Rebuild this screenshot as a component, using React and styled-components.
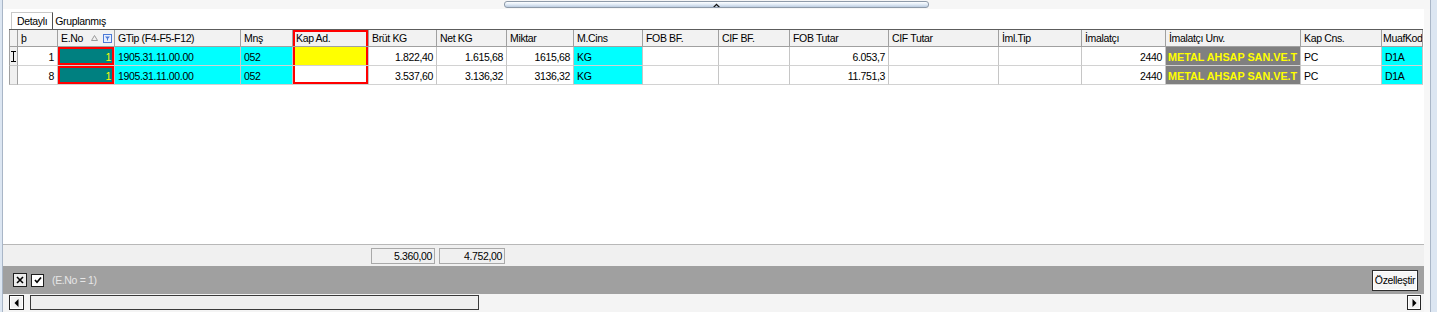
import React from "react";
import styled, { createGlobalStyle, css } from "styled-components";

const GlobalStyle = createGlobalStyle`
  html, body { margin: 0; padding: 0; background: #ffffff; }
  body {
    font-family: "Liberation Sans", Arial, sans-serif;
    font-size: 10.5px;
    letter-spacing: -0.35px;
    color: #000;
  }
  #root { width: 1437px; height: 312px; overflow: hidden; }
`;

const COLUMNS = [
  { key: "ind", w: 9, title: "" },
  { key: "no", w: 40, title: "þ", right: true },
  { key: "eno", w: 57, title: "E.No", right: true, bg: "#008080", color: "#ffff00", red: true },
  { key: "gtip", w: 126, title: "GTip (F4-F5-F12)", bg: "#00ffff" },
  { key: "mns", w: 52, title: "Mnş", bg: "#00ffff" },
  { key: "kap", w: 76, title: "Kap Ad.", box: true },
  { key: "brut", w: 68, title: "Brüt KG", right: true },
  { key: "net", w: 70, title: "Net KG", right: true },
  { key: "mik", w: 67, title: "Miktar", right: true },
  { key: "mcins", w: 69, title: "M.Cins", bg: "#00ffff" },
  { key: "fobbf", w: 76, title: "FOB BF." },
  { key: "cifbf", w: 71, title: "CIF BF." },
  { key: "fob", w: 99, title: "FOB Tutar", right: true },
  { key: "cif", w: 110, title: "CIF Tutar" },
  { key: "iml", w: 83, title: "İml.Tip" },
  { key: "imal", w: 84, title: "İmalatçı", right: true },
  { key: "unv", w: 135, title: "İmalatçı Unv.", bg: "#808080", color: "#ffff00", bold: true },
  { key: "kapcns", w: 81, title: "Kap Cns." },
  { key: "muaf", w: 41, title: "MuafKod", bg: "#00ffff", tight: true },
];

const TEMPLATE = COLUMNS.map((c) => `${c.w}px`).join(" ");

const ROWS = [
  {
    current: true,
    no: "1", eno: "1", gtip: "1905.31.11.00.00", mns: "052", kap: "", kapBg: "#ffff00",
    brut: "1.822,40", net: "1.615,68", mik: "1615,68", mcins: "KG", fobbf: "", cifbf: "",
    fob: "6.053,7", cif: "", iml: "", imal: "2440", unv: "METAL AHSAP SAN.VE.T",
    kapcns: "PC", muaf: "D1A",
  },
  {
    no: "8", eno: "1", gtip: "1905.31.11.00.00", mns: "052", kap: "",
    brut: "3.537,60", net: "3.136,32", mik: "3136,32", mcins: "KG", fobbf: "", cifbf: "",
    fob: "11.751,3", cif: "", iml: "", imal: "2440", unv: "METAL AHSAP SAN.VE.T",
    kapcns: "PC", muaf: "D1A",
  },
];

const Frame = styled.div`
  width: 1437px;
  height: 312px;
  display: flex;
  background: #ffffff;
`;

const Rail = styled.div`
  flex: none;
  width: ${(p) => p.$w}px;
  background: #dce6f2;
  ${(p) =>
    p.$side === "left"
      ? css`border-right: 1px solid #a9b6c7;`
      : css`border-left: 1px solid #a9b6c7;`}
  box-sizing: border-box;
`;

const Center = styled.div`
  flex: 1;
  display: flex;
  flex-direction: column;
  min-width: 0;
`;

const TopStrip = styled.div`
  height: 9px;
  flex: none;
  background: #f6f6f6;
  display: flex;
  justify-content: center;
  padding-top: 1px;
  box-sizing: border-box;
`;

const Splitter = styled.div`
  width: 425px;
  height: 7px;
  box-sizing: border-box;
  border: 1px solid #8e9aa9;
  border-radius: 3px;
  background: linear-gradient(#fdfeff 0%, #e4edf7 45%, #bccde0 100%);
  display: flex;
  justify-content: center;
  align-items: center;
`;

const ContentRow = styled.div`
  flex: 1;
  display: flex;
  min-height: 0;
`;

const Main = styled.div`
  width: 1421px;
  flex: none;
  display: flex;
  flex-direction: column;
`;

const Gutter = styled.div`
  flex: 1;
  background: #f7f7f7;
`;

const TabBar = styled.div`
  height: 20px;
  flex: none;
  display: flex;
  align-items: flex-end;
  padding-left: 8px;
  background: #ffffff;
`;

const Tab = styled.div`
  height: 17px;
  box-sizing: border-box;
  display: flex;
  align-items: center;
  padding: 0 ${(p) => (p.$active ? "5px" : "2px")};
  background: #ffffff;
  white-space: nowrap;
  ${(p) =>
    p.$active
      ? css`
          border-top: 1px solid #c8c8c8;
          border-left: 1px solid #c8c8c8;
          border-right: 1px solid #505050;
        `
      : css`
          border: none;
        `}
`;

const GridArea = styled.div`
  height: 215px;
  flex: none;
  background: #ffffff;
  padding-left: 6px;
`;

const Table = styled.div`
  display: grid;
  grid-template-columns: ${TEMPLATE};
  width: max-content;
  border-top: 1px solid #5c5c5c;
`;

const HeadCell = styled.div`
  height: 17px;
  box-sizing: border-box;
  background: #f2f2f2;
  border-right: 1px solid #a0a0a0;
  border-bottom: 1px solid #a0a0a0;
  ${(p) => p.$first && css`border-left: 1px solid #a0a0a0;`}
  padding: 0 2px 0 ${(p) => (p.$tight ? "1px" : "3px")};
  display: flex;
  align-items: center;
  white-space: nowrap;
  overflow: hidden;
  ${(p) =>
    p.$box &&
    css`
      box-shadow: inset 2px 2px 0 #ff0000, inset -2px 0 0 #ff0000;
    `}
`;

const HeadIcons = styled.span`
  margin-left: auto;
  display: flex;
  align-items: center;
  gap: 5px;
`;

const Cell = styled.div`
  height: 19px;
  box-sizing: border-box;
  background: ${(p) => p.$bg || "#ffffff"};
  color: ${(p) => p.$color || "#000"};
  border-right: 1px solid #c6c6c6;
  border-bottom: 1px solid #d2d2d2;
  padding: 1px 3px 0 3px;
  display: flex;
  align-items: center;
  justify-content: ${(p) => (p.$right ? "flex-end" : "flex-start")};
  white-space: nowrap;
  overflow: hidden;
  ${(p) =>
    p.$bold &&
    css`
      font-weight: 700;
      font-size: 10.8px;
      letter-spacing: 0;
      padding: 1px 0 0 2px;
    `}
  ${(p) => p.$red && css`box-shadow: inset 0 0 0 2px #ff0000;`}
  ${(p) => p.$boxMid && css`box-shadow: inset 2px 0 0 #ff0000, inset -2px 0 0 #ff0000;`}
  ${(p) =>
    p.$boxEnd &&
    css`
      box-shadow: inset 2px 0 0 #ff0000, inset -2px 0 0 #ff0000, inset 0 -2px 0 #ff0000;
    `}
`;

const IndicatorCell = styled.div`
  height: 19px;
  box-sizing: border-box;
  background: #f0f0f0;
  border-left: 1px solid #a0a0a0;
  border-right: 1px solid #a0a0a0;
  border-bottom: 1px solid #c6c6c6;
  display: flex;
  align-items: center;
`;

const Footer = styled.div`
  height: 22px;
  flex: none;
  box-sizing: border-box;
  border-top: 1px solid #b8b8b8;
  background: #f0f0f0;
  padding-left: 6px;
  display: grid;
  grid-template-columns: ${TEMPLATE};
  align-items: start;
`;

const SumBox = styled.div`
  grid-column: ${(p) => p.$col};
  margin: 3px 2px 0 2px;
  height: 16px;
  box-sizing: border-box;
  border: 1px solid #a9a9a9;
  background: #f0f0f0;
  display: flex;
  align-items: center;
  justify-content: flex-end;
  padding-right: 2px;
`;

const FilterPanel = styled.div`
  height: 28px;
  flex: none;
  background: #a0a0a0;
  display: flex;
  align-items: center;
  padding: 0 6px 0 10px;
`;

const MiniBox = styled.div`
  width: ${(p) => p.$s}px;
  height: ${(p) => p.$s}px;
  box-sizing: border-box;
  border: 1px solid #1e1e1e;
  background: ${(p) => p.$bg};
  display: flex;
  align-items: center;
  justify-content: center;
  margin-right: ${(p) => p.$mr}px;
`;

const FilterText = styled.span`
  color: #e6e6e6;
  margin-left: 4px;
`;

const Customize = styled.button`
  margin-left: auto;
  height: 21px;
  width: 46px;
  box-sizing: border-box;
  border: 1px solid #2c2c2c;
  box-shadow: inset 0 0 0 1px #ffffff;
  background: #f6f6f6;
  font: inherit;
  letter-spacing: inherit;
  color: #000;
  padding: 0;
`;

const ScrollRow = styled.div`
  height: 18px;
  flex: none;
  box-sizing: border-box;
  background: #f4f4f4;
  display: flex;
  align-items: flex-start;
  padding: 1px 3px 0 6px;
`;

const ArrowBtn = styled.div`
  width: ${(p) => p.$w}px;
  height: 15px;
  box-sizing: border-box;
  border: 1px solid #262626;
  box-shadow: inset 0 0 0 1px #ffffff;
  background: #f2f2f2;
  display: flex;
  align-items: center;
  justify-content: center;
  ${(p) => p.$end && css`margin-left: auto;`}
`;

const Thumb = styled.div`
  width: 449px;
  height: 15px;
  box-sizing: border-box;
  margin-left: 6px;
  border: 1px solid #3a3a3a;
  background: #efefef;
`;

const IBeam = () => (
  <svg width="7" height="11" viewBox="0 0 7 11">
    <path d="M1 0.5h5M3.5 0.5v10M1 10.5h5" stroke="#000" strokeWidth="1" fill="none" />
  </svg>
);

const SortTri = () => (
  <svg width="7" height="6" viewBox="0 0 7 6">
    <path d="M3.5 0.5L6.5 5.5H0.5Z" stroke="#9a9a9a" strokeWidth="1" fill="none" />
  </svg>
);

const FilterIcon = () => (
  <svg width="9" height="9" viewBox="0 0 9 9">
    <rect x="0.5" y="0.5" width="8" height="8" fill="#e9f0ff" stroke="#4d7ad6" />
    <path d="M2 2.5h5L5 4.8v2L4 6.3V4.8Z" fill="#4d7ad6" />
  </svg>
);

const Caret = () => (
  <svg width="7" height="4" viewBox="0 0 7 4">
    <path d="M0 4L3.5 0.5L7 4H5.2L3.5 2.3L1.8 4Z" fill="#111" />
  </svg>
);

const XMark = () => (
  <svg width="8" height="8" viewBox="0 0 8 8">
    <path d="M1 1L7 7M7 1L1 7" stroke="#000" strokeWidth="1.6" />
  </svg>
);

const CheckMark = () => (
  <svg width="8" height="8" viewBox="0 0 8 8">
    <path d="M1 4L3 6.2L7 1.5" stroke="#000" strokeWidth="1.7" fill="none" />
  </svg>
);

const LeftTri = () => (
  <svg width="5" height="8" viewBox="0 0 5 8">
    <path d="M4.5 0L0.5 4L4.5 8Z" fill="#000" />
  </svg>
);

const RightTri = () => (
  <svg width="5" height="8" viewBox="0 0 5 8">
    <path d="M0.5 0L4.5 4L0.5 8Z" fill="#000" />
  </svg>
);

function DataRow({ row, last }) {
  return COLUMNS.map((c) => {
    if (c.key === "ind") {
      return <IndicatorCell key={c.key}>{row.current ? <IBeam /> : null}</IndicatorCell>;
    }
    const bg = c.key === "kap" ? row.kapBg : c.bg;
    return (
      <Cell
        key={c.key}
        $bg={bg}
        $color={c.color}
        $right={c.right}
        $bold={c.bold}
        $red={c.red}
        $boxMid={c.box && !last}
        $boxEnd={c.box && last}
      >
        {row[c.key]}
      </Cell>
    );
  });
}

export default function App() {
  return (
    <>
      <GlobalStyle />
      <Frame>
        <Rail $side="left" $w={3} />
        <Center>
          <TopStrip>
            <Splitter>
              <Caret />
            </Splitter>
          </TopStrip>
          <ContentRow>
            <Main>
              <TabBar>
                <Tab $active>Detaylı</Tab>
                <Tab>Gruplanmış</Tab>
              </TabBar>
              <GridArea>
                <Table>
                  {COLUMNS.map((c, i) => (
                    <HeadCell key={c.key} $first={i === 0} $box={c.box} $tight={c.tight}>
                      {c.title}
                      {c.key === "eno" && (
                        <HeadIcons>
                          <SortTri />
                          <FilterIcon />
                        </HeadIcons>
                      )}
                    </HeadCell>
                  ))}
                  {ROWS.map((r, i) => (
                    <DataRow key={i} row={r} last={i === ROWS.length - 1} />
                  ))}
                </Table>
              </GridArea>
              <Footer>
                <SumBox $col={7}>5.360,00</SumBox>
                <SumBox $col={8}>4.752,00</SumBox>
              </Footer>
              <FilterPanel>
                <MiniBox $s={14} $bg="#ececec" $mr={4}>
                  <XMark />
                </MiniBox>
                <MiniBox $s={13} $bg="#ffffff" $mr={4}>
                  <CheckMark />
                </MiniBox>
                <FilterText>(E.No = 1)</FilterText>
                <Customize>Özelleştir</Customize>
              </FilterPanel>
              <ScrollRow>
                <ArrowBtn $w={15}>
                  <LeftTri />
                </ArrowBtn>
                <Thumb />
                <ArrowBtn $w={14} $end>
                  <RightTri />
                </ArrowBtn>
              </ScrollRow>
            </Main>
            <Gutter />
          </ContentRow>
        </Center>
        <Rail $side="right" $w={7} />
      </Frame>
    </>
  );
}
